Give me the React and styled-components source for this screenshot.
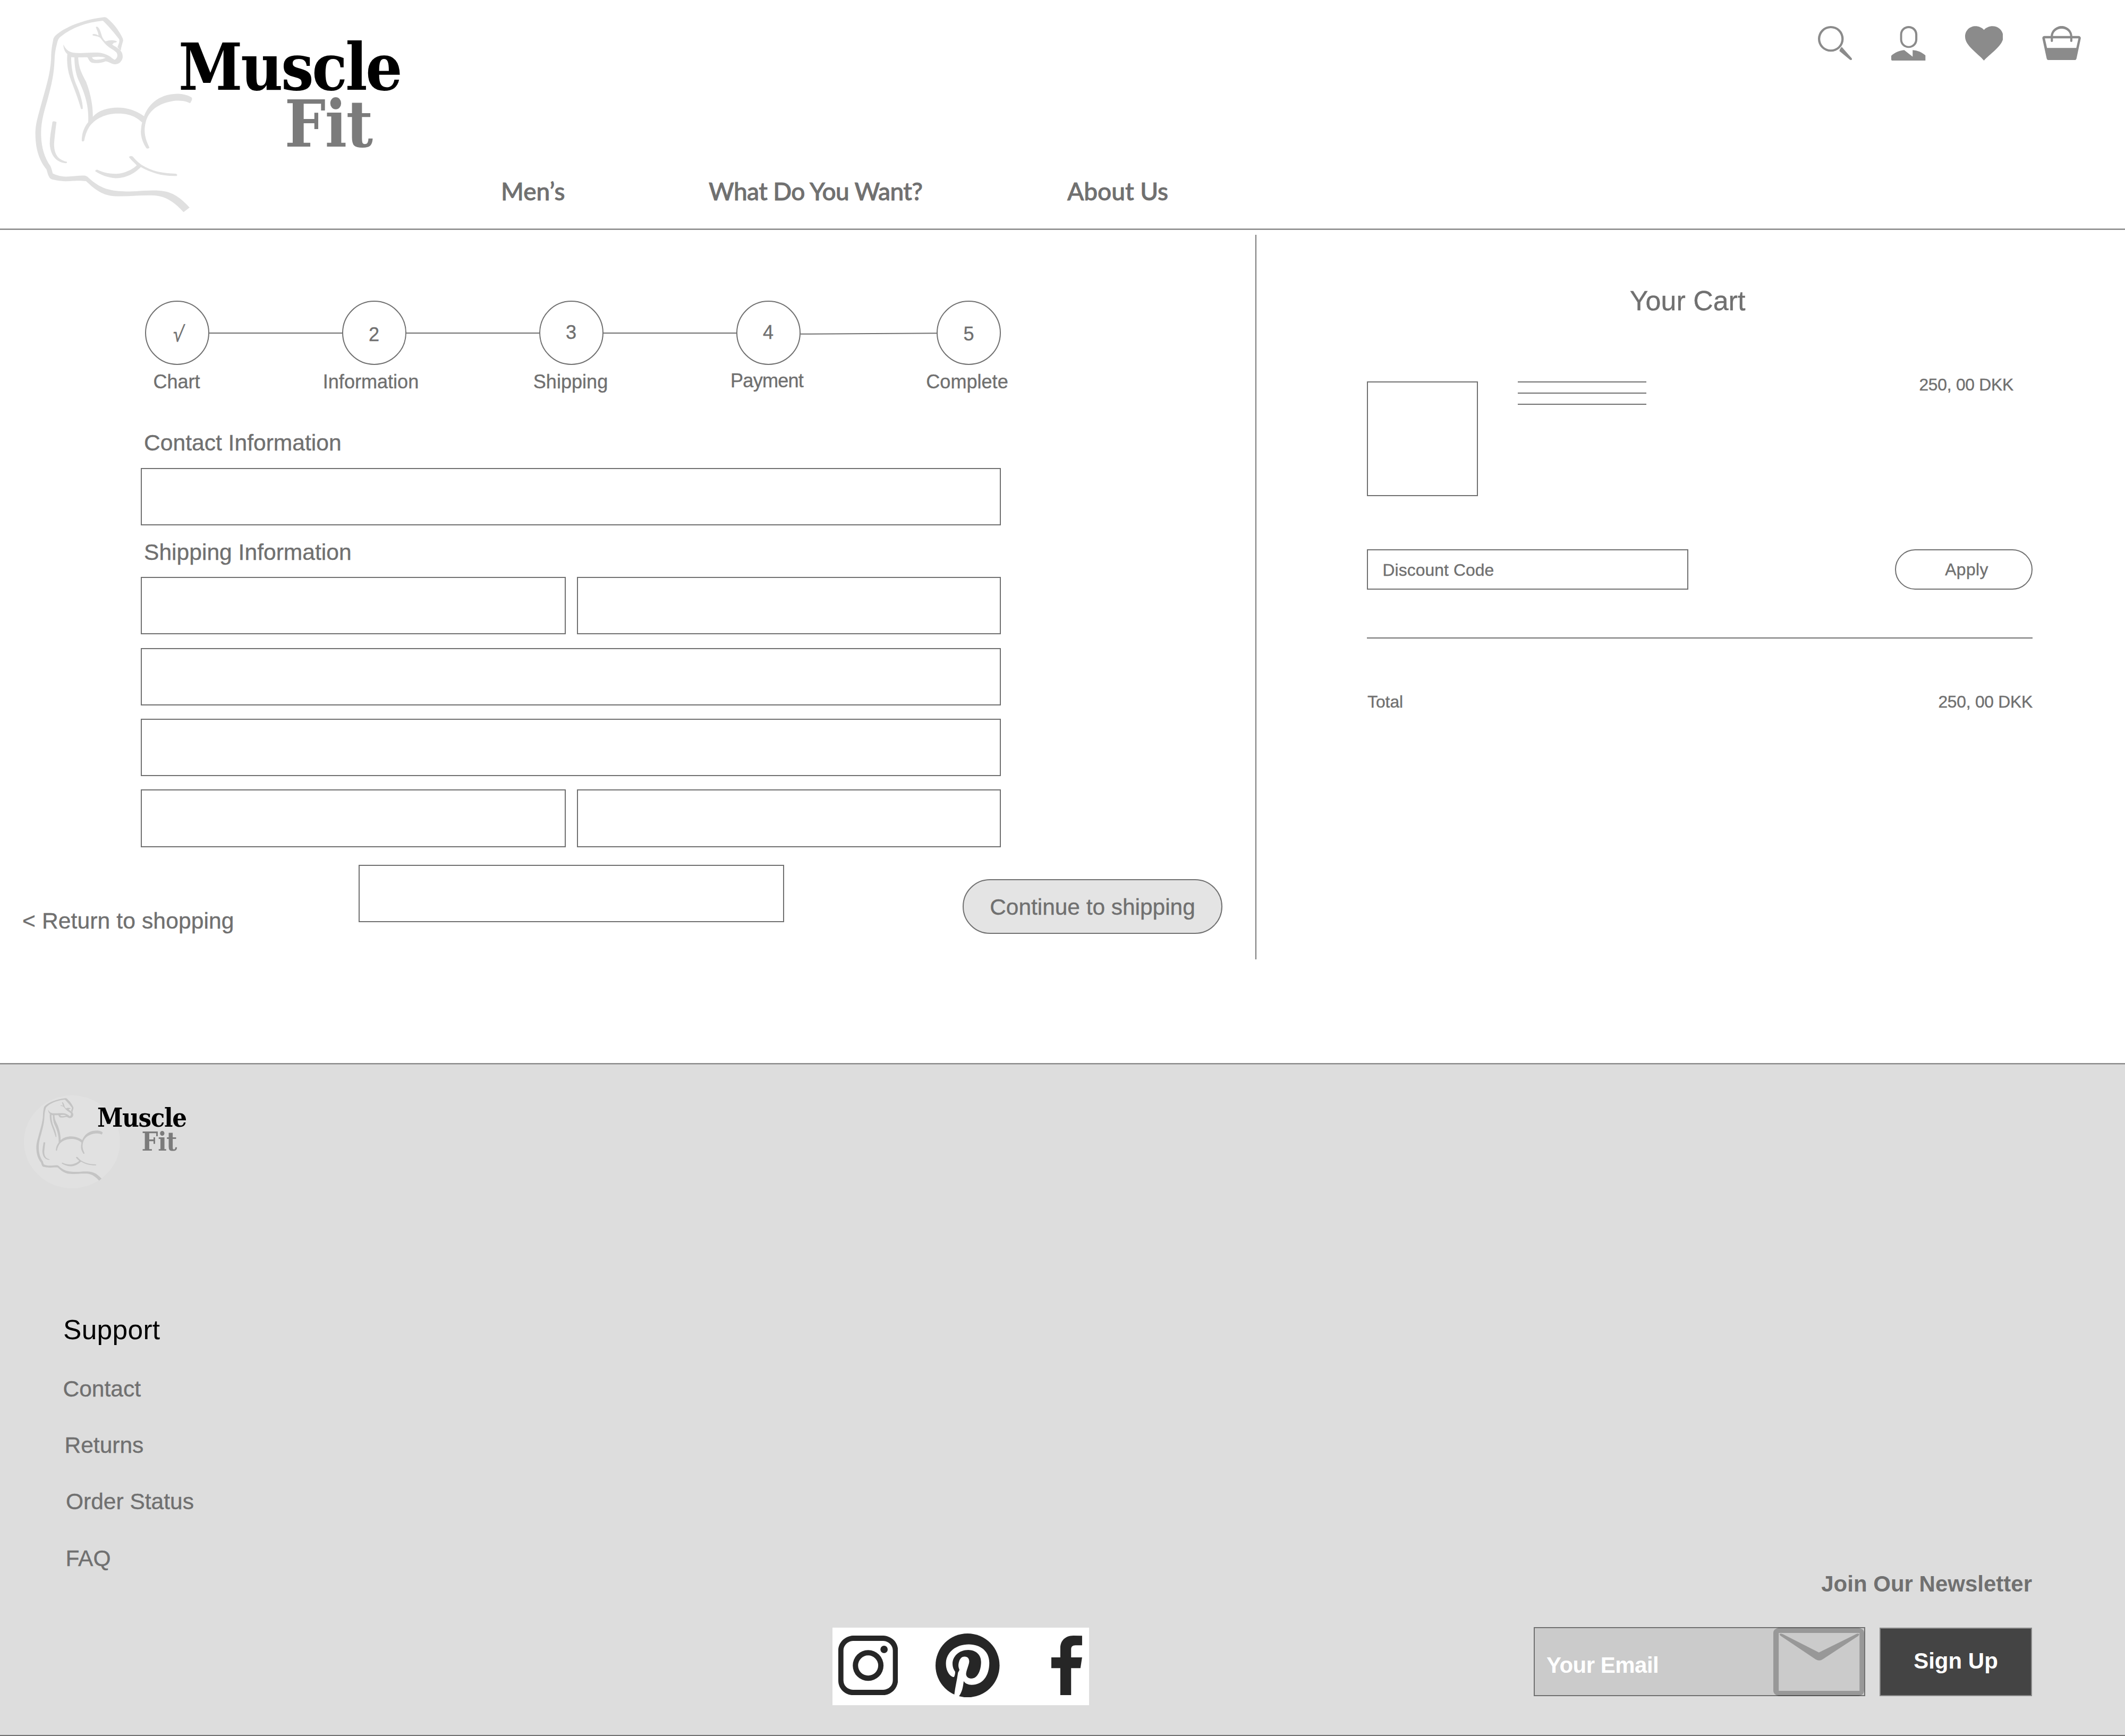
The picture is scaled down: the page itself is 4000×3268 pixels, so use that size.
import React from "react";
import styled, { createGlobalStyle } from "styled-components";

const GREY = "#707070";
const SANS = '"Liberation Sans", Arial, sans-serif';

const GlobalStyle = createGlobalStyle`
  *, *::before, *::after { box-sizing: border-box; }
  body {
    margin: 0;
    background: #fff;
    color: ${GREY};
    font-family: ${SANS};
    -webkit-text-stroke: 0.4px currentColor;
  }
`;

const Page = styled.div`
  display: flex;
  flex-direction: column;
  width: 4000px;
  height: 3268px;
  overflow: hidden;
`;

const SoftRule = styled.div`
  flex: none;
  height: 3px;
  background: ${GREY};
  border-top: 1px solid #b0b0b0;
  border-bottom: 1px solid #b0b0b0;
`;

/* ---------- brand ---------- */

const Brand = styled.div`
  display: flex;
  align-items: flex-start;
`;

const Badge = styled.div`
  flex: none;
  width: ${(p) => p.$w}px;
  height: ${(p) => p.$h}px;
  padding: ${(p) => p.$pad};
  border-radius: 50%;
  background: ${(p) => p.$bg || "transparent"};
`;

const Wordmark = styled.div`
  display: flex;
  flex-direction: column;
  margin-left: ${(p) => p.$x}px;
  margin-top: ${(p) => p.$y}px;
  font-family: "DejaVu Serif Condensed", "DejaVu Serif", serif;
  font-stretch: condensed;
  font-weight: 700;
  font-size: ${(p) => p.$size}px;
  line-height: ${(p) => p.$line}px;
  letter-spacing: ${(p) => p.$track}em;
  white-space: nowrap;
  -webkit-text-stroke: 0;
`;

const WordTop = styled.span`
  color: #000;
`;

const WordBottom = styled.span`
  color: #7b7b7b;
  padding-left: ${(p) => p.$inset}em;
  letter-spacing: -0.01em;
`;

const Arm = ({ width, height, color }) => (
  <svg
    width={width}
    height={height}
    viewBox="120 80 600 1130"
    preserveAspectRatio="none"
    fill={color}
    fillRule="evenodd"
    style={{ display: "block" }}
  >
    <path d="M446 285C448 262 452 245 455 228Q455 218 450 205C435 160 415 125 395 100Q388 94 378 97C310 110 240 150 205 200Q197 212 196 230C192 260 189 290 189 330C186 420 168 500 152 590C138 670 131 700 131 760C132 850 148 910 172 955C176 975 178 990 184 1003Q187 1010 200 1014C230 1025 250 1022 270 1020C290 1018 300 1018 318 1021C345 1060 375 1100 420 1106C470 1110 520 1098 570 1102C620 1108 650 1150 678 1196L700 1170C670 1120 640 1080 590 1075C530 1070 500 1085 440 1077C385 1072 355 1040 328 1003Q322 992 312 990C280 990 260 998 235 995C215 992 205 985 195 978Q190 945 186 935C165 890 152 830 152 750C152 680 165 620 176 560C190 480 200 420 202 330C203 290 208 260 213 232Q216 215 225 205C265 155 320 125 380 116C400 145 425 190 440 220Q442 228 440 240L434 265Z" />
    <path d="M234 250Q245 285 262 293C280 302 310 298 345 296C370 294 385 300 400 312C412 322 420 335 424 336C432 330 435 315 433 305C432 290 415 280 400 262C385 245 378 225 370 212C362 202 350 203 343 199Q340 194 345 191C352 190 358 194 364 199C364 185 357 165 354 153Q356 147 361 151C370 165 372 180 377 205C382 222 386 228 390 232C400 228 405 225 415 226Q430 228 432 234Q430 239 420 240C418 245 417 248 414 250C425 262 440 272 445 285C452 295 454 310 453 325C450 345 440 362 425 362C410 360 400 345 390 345C375 355 350 358 338 352C330 345 328 335 323 322C300 322 280 325 262 321L249 304C240 292 235 275 234 250ZM340 322C342 332 348 336 356 336C370 336 385 330 390 326C380 318 360 318 340 322Z" />
    <path d="M249 302C246 350 250 400 262 450C272 490 290 560 299 612Q302 618 306 612C306 570 292 510 280 470C268 420 263 370 263 320Z" />
    <path d="M275 318C275 370 280 415 290 450C305 500 330 580 326 690L343 665C344 610 338 540 318 460C300 405 290 380 289 318Z" />
    <path d="M343 658C365 620 400 606 435 606C480 606 515 635 532 655C545 600 580 530 655 528C680 528 700 540 708 550Q712 560 702 581Q698 580 690 574C680 568 665 566 650 567C600 575 550 610 538 690C530 740 535 780 552 832Q548 840 541 836C525 800 518 760 521 730Q522 705 525 690C500 655 475 640 435 640C390 640 350 670 330 715C318 745 314 770 311 793Q306 800 302 794C302 760 308 720 328 685Z" />
    <path d="M194 686Q200 680 209 688C205 730 202 770 200 810C200 860 210 900 247 912Q250 918 243 920C205 915 186 870 184 810C184 770 190 730 194 686Z" />
    <path d="M476 885Q482 876 490 882C500 900 510 915 522 928C560 965 600 977 650 979Q658 985 652 992C600 995 560 975 520 942C500 975 465 1005 428 1005C400 1003 370 985 352 966Q352 956 360 957C375 968 395 980 430 980C460 978 490 955 505 932C495 915 485 905 476 885Z" />
  </svg>
);

/* ---------- header ---------- */

const Header = styled.header`
  display: grid;
  grid-template-columns: 943px 1fr auto;
  flex: none;
  height: 430px;
`;

const HeaderBrand = styled(Brand)`
  padding: 27px 0 0 61px;
`;

const Nav = styled.nav`
  display: flex;
  align-items: flex-end;
  gap: 274px;
  padding-bottom: 40px;
`;

const NavLink = styled.a`
  flex: none;
  width: ${(p) => p.$w}px;
  font-family: Lato, "Open Sans", sans-serif;
  font-weight: 500;
  font-size: 46px;
  line-height: 60px;
  letter-spacing: ${(p) => p.$track || 0}px;
  white-space: nowrap;
  -webkit-text-stroke: 0.9px currentColor;
`;

const Tools = styled.div`
  display: flex;
  align-items: flex-start;
  gap: 73.5px;
  padding: 49px 83px 0 0;
`;

const Glyph = ({ w, h, box, color, children }) => (
  <svg
    width={w}
    height={h}
    viewBox={box}
    preserveAspectRatio="none"
    fill={color}
    fillRule="evenodd"
    style={{ display: "block", flex: "none" }}
  >
    {children}
  </svg>
);

const ICON = "#8b8b8b";

const HeaderTools = () => (
  <Tools>
    <Glyph w={64.4} h={64.7} box="115 86 174 194" color={ICON}>
      <path d="M115 158.5a65.5 72.5 0 1 0 131 0a65.5 72.5 0 1 0 -131 0ZM126.500 158.5a54 60.5 0 1 0 108 0a54 60.5 0 1 0 -108 0Z" />
      <path d="M236 204L287 268Q290 274 286 277Q282 280 277 276L224 227Q228 212 236 204Z" />
    </Glyph>
    <Glyph w={64.7} h={65.3} box="488 86 175 196" color={ICON}>
      <path d="M533 134C533 106 553 86 577 86C601 86 621 106 621 134V162C621 190 601 210 577 210C553 210 533 190 533 162ZM543.500 135V161C543.500 183 558 199 577 199C595 199 610 183 610 161V135C610 113 595 98 577 98C558 98 543.500 113 543.500 135Z" />
      <path d="M488 254C505 237 528 225 554 222L597 259V222C622 224 645 235 662 252V282H494Q488 280 488 275Z" />
    </Glyph>
    <Glyph w={71.8} h={65} box="860 86 194 195" color={ICON}>
      <path d="M956 281C925 240 860 198 860 146C860 110 885 87 912 87C930 87 946 95 956 108C966 95 982 87 1000 87C1030 87 1054 112 1054 148C1054 196 990 240 956 281Z" />
    </Glyph>
    <Glyph w={73.2} h={64.3} box="1253 86 198 193" color={ICON}>
      <path d="M1264 142H1440Q1450 144 1450 155L1428 270Q1426 279 1417 279H1287Q1277 278 1276 268L1254 155Q1254 143 1264 142ZM1267 156L1278 210H1427L1438 156Z" />
      <path d="M1297 172V145C1297 110 1325 86 1352 86C1380 86 1407 110 1407 145V172Q1402 180 1396 172V145C1396 118 1375 101 1352 101C1330 101 1308 118 1308 145V172Q1302 180 1297 172Z" />
    </Glyph>
  </Tools>
);

/* ---------- checkout ---------- */

const Main = styled.main`
  display: flex;
  align-items: flex-start;
  flex: none;
  height: 1568px;
`;

const Checkout = styled.section`
  flex: none;
  width: 2363px;
  padding-top: 133px;
`;

const Divider = styled.div`
  flex: none;
  width: 2px;
  height: 1364px;
  margin-top: 9px;
  background: #7a7a7a;
`;

const Stepper = styled.div`
  display: flex;
  align-items: flex-start;
  height: 173px;
  padding-left: 272.5px;
`;

const Step = styled.div`
  display: flex;
  flex-direction: column;
  align-items: center;
  flex: none;
  width: 121px;
  font-size: 36.1px;
  line-height: 40px;
`;

const StepCircle = styled.div`
  display: flex;
  justify-content: center;
  width: 121px;
  height: 121px;
  padding-top: ${(p) => p.$top}px;
  border: 2px solid ${GREY};
  border-radius: 50%;
`;

const StepLabel = styled.div`
  margin-top: ${(p) => p.$top}px;
  margin-left: ${(p) => p.$nudge}px;
  letter-spacing: ${(p) => p.$track || 0}px;
  white-space: nowrap;
`;

const CheckMark = styled.span`
  font-family: "Liberation Sans", sans-serif;
  font-size: 37px;
  transform: skewX(-8deg) scaleY(1.12);
`;

const Connector = styled.div`
  flex: none;
  width: ${(p) => p.$w}px;
  height: 2px;
  margin-top: ${(p) => (p.$tilt ? 61 : 60)}px;
  background: ${GREY};
  transform: rotate(${(p) => p.$tilt || 0}deg);
`;

const steps = [
  { mark: <CheckMark>√</CheckMark>, label: "Chart", top: 44, labelTop: 12, nudge: -1, line: 250 },
  { mark: "2", label: "Information", top: 42, labelTop: 12, nudge: -12, line: 250 },
  { mark: "3", label: "Shipping", top: 38, labelTop: 12, nudge: -2, line: 250 },
  { mark: "4", label: "Payment", top: 38, labelTop: 10, nudge: -5, line: 256.5, tilt: -0.35, track: -0.8 },
  { mark: "5", label: "Complete", top: 41, labelTop: 12, nudge: -6 },
];

const Form = styled.div`
  display: flex;
  flex-direction: column;
  width: 1883.5px;
  padding: 70px 0 0 265px;
`;

const FormTitle = styled.h2`
  margin: ${(p) => p.$top}px 0 22px;
  padding-left: 6px;
  font-size: 42.6px;
  font-weight: 400;
  line-height: 49.5px;
`;

const FieldGrid = styled.div`
  display: grid;
  grid-template-columns: 800px 798px;
  justify-content: space-between;
  row-gap: 25.2px;
`;

const Field = styled.div`
  height: 108.2px;
  border: 2px solid ${GREY};
  grid-column: ${(p) => (p.$wide ? "1 / -1" : "auto")};
`;

const Actions = styled.div`
  display: grid;
  grid-template-columns: 634px 801px 336px 489px;
  justify-content: start;
  padding: 33px 0 0 41px;
`;

const BackLink = styled.a`
  padding: 80px 0 0 1px;
  font-size: 42.6px;
  line-height: 50px;
  letter-spacing: 0.1px;
  white-space: nowrap;
`;

const Continue = styled.button`
  grid-column: 4;
  width: 489px;
  height: 103px;
  margin-top: 27px;
  padding: 4px 0 0;
  border: 2px solid ${GREY};
  border-radius: 52px;
  background: #e4e4e4;
  color: ${GREY};
  font: 400 42.4px/50px ${SANS};
`;

/* ---------- cart ---------- */

const Cart = styled.section`
  flex: 1;
  padding: 103px 174px 0 208px;
  font-size: 31.8px;
  line-height: 36px;
`;

const CartTitle = styled.h1`
  margin: 0 0 122px;
  padding-right: 46px;
  font-size: 52px;
  font-weight: 400;
  line-height: 60px;
  text-align: center;
`;

const CartItem = styled.div`
  display: flex;
  align-items: flex-start;
  height: 216px;
`;

const Thumb = styled.div`
  width: 208.5px;
  height: 216px;
  border: 2px solid ${GREY};
`;

const TextLines = styled.div`
  display: flex;
  flex-direction: column;
  gap: 19px;
  width: 242.5px;
  margin-left: 75px;
`;

const TextLine = styled.div`
  height: 2px;
  background: ${GREY};
`;

const Price = styled.div`
  margin: ${(p) => (p.$item ? "-12px 36px 0 auto" : "0")};
  letter-spacing: -0.25px;
  white-space: nowrap;
`;

const CartRow = styled.div`
  display: flex;
  justify-content: space-between;
  margin-top: ${(p) => p.$top}px;
`;

const Discount = styled.div`
  width: 604.5px;
  height: 75.5px;
  padding: 19px 0 0 27.5px;
  border: 2px solid ${GREY};
  letter-spacing: 0.1px;
`;

const Apply = styled.button`
  width: 259px;
  height: 75.5px;
  padding: 1px 0 0 11px;
  border: 2px solid ${GREY};
  border-radius: 38px;
  background: transparent;
  color: ${GREY};
  font: 400 31.8px/36px ${SANS};
  letter-spacing: 0.4px;
`;

const CartRule = styled.div`
  height: 2px;
  margin-top: 90px;
  background: ${GREY};
`;

const TotalLabel = styled.span`
  padding-left: 1px;
`;

/* ---------- footer ---------- */

const Footer = styled.footer`
  display: flex;
  flex-direction: column;
  flex: 1;
  background: #ddd;
  border-bottom: 2px solid ${GREY};
`;

const FooterBrand = styled(Brand)`
  flex: none;
  height: 469px;
  padding: 58px 0 0 45px;
`;

const Links = styled.div`
  display: flex;
  flex-direction: column;
  flex: none;
  height: 484px;
`;

const LinksTitle = styled.h3`
  flex: none;
  margin: 0 0 57px;
  padding-left: 119px;
  color: #000;
  font-size: 51.5px;
  font-weight: 400;
  line-height: 60px;
  letter-spacing: 0.3px;
  -webkit-text-stroke: 0;
`;

const FooterLink = styled.a`
  flex: none;
  height: 106.2px;
  padding-left: ${(p) => p.$x}px;
  font-size: 42.5px;
  line-height: 50px;
`;

const FooterBottom = styled.div`
  display: flex;
  align-items: flex-end;
  justify-content: space-between;
  flex: none;
  height: 253px;
  padding: 0 175px 0 1567px;
`;

const Social = styled.div`
  display: flex;
  align-items: flex-start;
  width: 483px;
  height: 146px;
  background: #fff;
`;

const SocialItem = styled.div`
  padding: ${(p) => p.$pad};
`;

const Newsletter = styled.div`
  display: flex;
  flex-direction: column;
  width: 938px;
  height: 253px;
  font-size: 42px;
  font-weight: 700;
  line-height: 50px;
`;

const NewsTitle = styled.div`
  margin-bottom: 56px;
  text-align: right;
  -webkit-text-stroke: 0;
`;

const NewsRow = styled.div`
  display: flex;
  justify-content: space-between;
`;

const EmailBox = styled.div`
  display: flex;
  justify-content: space-between;
  width: 624px;
  height: 130px;
  padding-left: 22px;
  border: 2px solid ${GREY};
  background: #cbcbcb;
  color: #fff;
  -webkit-text-stroke: 0;
`;

const EmailText = styled.span`
  padding-top: 45px;
  letter-spacing: -0.5px;
`;

const Envelope = styled.div`
  flex: none;
  margin-top: -1px;
`;

const SignUp = styled.button`
  width: 287px;
  height: 129px;
  margin-top: 1px;
  padding: 0 0 3px;
  border: 2px solid #888;
  background: #444;
  color: #fff;
  font: 700 42px/50px ${SANS};
  -webkit-text-stroke: 0;
`;

const INK = "#262626";

export default function App() {
  return (
    <>
      <GlobalStyle />
      <Page>
        <Header>
          <HeaderBrand>
            <Badge $w={306} $h={377} $pad="0">
              <Arm width={306} height={377} color="#e0e0e0" />
            </Badge>
            <Wordmark $x={-31} $y={46} $size={121} $line={107} $track={-0.027}>
              <WordTop>Muscle</WordTop>
              <WordBottom $inset={1.65}>Fit</WordBottom>
            </Wordmark>
          </HeaderBrand>
          <Nav>
            <NavLink $w={117}>Men’s</NavLink>
            <NavLink $w={401} $track={-0.6}>What Do You Want?</NavLink>
            <NavLink $w={190}>About Us</NavLink>
          </Nav>
          <HeaderTools />
        </Header>
        <SoftRule />

        <Main>
          <Checkout>
            <Stepper>
              {steps.map((s) => (
                <React.Fragment key={s.label}>
                  <Step>
                    <StepCircle $top={s.top}>{s.mark}</StepCircle>
                    <StepLabel $top={s.labelTop} $nudge={s.nudge} $track={s.track}>
                      {s.label}
                    </StepLabel>
                  </Step>
                  {s.line && <Connector $w={s.line} $tilt={s.tilt} />}
                </React.Fragment>
              ))}
            </Stepper>
            <Form>
              <FormTitle $top={0}>Contact Information</FormTitle>
              <Field />
              <FormTitle $top={26}>Shipping Information</FormTitle>
              <FieldGrid>
                <Field />
                <Field />
                <Field $wide />
                <Field $wide />
                <Field />
                <Field />
              </FieldGrid>
            </Form>
            <Actions>
              <BackLink>&lt; Return to shopping</BackLink>
              <Field />
              <Continue>Continue to shipping</Continue>
            </Actions>
          </Checkout>
          <Divider />
          <Cart>
            <CartTitle>Your Cart</CartTitle>
            <CartItem>
              <Thumb />
              <TextLines>
                <TextLine />
                <TextLine />
                <TextLine />
              </TextLines>
              <Price $item>250, 00 DKK</Price>
            </CartItem>
            <CartRow $top={100}>
              <Discount>Discount Code</Discount>
              <Apply>Apply</Apply>
            </CartRow>
            <CartRule />
            <CartRow $top={101}>
              <TotalLabel>Total</TotalLabel>
              <Price>250, 00 DKK</Price>
            </CartRow>
          </Cart>
        </Main>

        <SoftRule />
        <Footer>
          <FooterBrand>
            <Badge $w={181} $h={175} $pad="3px 0 0 21px" $bg="#e1e1e1">
              <Arm width={129.5} height={159.5} color="#c4c4c4" />
            </Badge>
            <Wordmark $x={-43} $y={19} $size={48.6} $line={45} $track={-0.028}>
              <WordTop>Muscle</WordTop>
              <WordBottom $inset={1.72}>Fit</WordBottom>
            </Wordmark>
          </FooterBrand>
          <Links>
            <LinksTitle>Support</LinksTitle>
            <FooterLink $x={118.5}>Contact</FooterLink>
            <FooterLink $x={121.5}>Returns</FooterLink>
            <FooterLink $x={124}>Order Status</FooterLink>
            <FooterLink $x={123.5}>FAQ</FooterLink>
          </Links>
          <FooterBottom>
            <Social>
              <SocialItem $pad="15px 0 0 11px">
                <Glyph w={112.3} h={112.3} box="110 116 326 337" color={INK}>
                  <path d="M190 116H356C405 120 436 155 436 200V370C434 415 400 450 356 453H190C145 450 110 415 110 370V200C110 155 145 120 190 116ZM190 146C160 148 138 172 138 200V368C138 398 160 420 190 422H356C386 420 408 398 408 368V200C408 172 386 148 356 146Z" />
                  <path d="M189 285a84 87 0 1 0 168 0a84 87 0 1 0 -168 0ZM218 285a55 57 0 1 0 110 0a55 57 0 1 0 -110 0Z" />
                  <ellipse cx="360" cy="194" rx="20" ry="21" />
                </Glyph>
              </SocialItem>
              <SocialItem $pad="11px 0 0 71px">
                <Glyph w={120.5} h={120} box="643 104 350 361" color={INK}>
                  <ellipse cx="818" cy="285" rx="175" ry="181" />
                  <path
                    fill="#fff"
                    d="M746 448C750 410 760 370 766 325C772 315 775 310 772 305C766 290 768 275 772 262C777 245 788 235 802 235C820 235 828 248 827 265C825 285 810 315 810 335C812 352 825 360 843 359C875 355 892 310 892 265C892 225 865 198 822 197C770 197 736 235 736 275C736 295 742 308 750 320C751 330 749 340 745 349C740 352 735 350 731 347C708 330 699 300 700 270C703 210 755 166 825 166C890 167 937 205 937 270C937 345 900 395 840 395C820 394 806 388 797 374C793 410 788 435 771 460L765 475L743 472Z"
                  />
                </Glyph>
              </SocialItem>
              <SocialItem $pad="15px 0 0 97px">
                <Glyph w={57.9} h={112.3} box="1275 116 168 337" color={INK}>
                  <path d="M1443 117V171H1407C1390 172 1383 178 1383 195V239H1443L1434 300H1383V453H1324V300H1275V239H1324V185C1325 145 1350 117 1395 116Z" />
                </Glyph>
              </SocialItem>
            </Social>
            <Newsletter>
              <NewsTitle>Join Our Newsletter</NewsTitle>
              <NewsRow>
                <EmailBox>
                  <EmailText>Your Email</EmailText>
                  <Envelope>
                    <Glyph w={171} h={129} box="657 432 235 386" color="rgba(0,0,0,0.25)">
                      <path d="M671 432H878Q892 440 892 462V788Q892 810 878 818H671Q657 808 657 788V462Q657 440 671 432ZM671 462V788H880V462Z" />
                      <path d="M673 468Q677 462 683 470L775 572L871 469Q877 463 879 469Q880 473 876 480L785 610Q776 624 766 610L675 477Z" />
                    </Glyph>
                  </Envelope>
                </EmailBox>
                <SignUp>Sign Up</SignUp>
              </NewsRow>
            </Newsletter>
          </FooterBottom>
        </Footer>
      </Page>
    </>
  );
}
